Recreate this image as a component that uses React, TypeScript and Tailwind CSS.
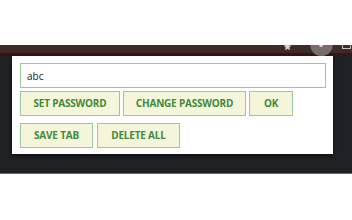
import React from "react"

const btn =
  "h-[25px] whitespace-nowrap border border-[#9cc79c] bg-[#f5f5dc] px-0 text-center text-[10px] font-bold uppercase tracking-[-0.2px] text-[#3f8a3a] [font-family:'Open_Sans',sans-serif]"

export default function App() {
  return (
    <div className="h-[220px] w-[352px] overflow-hidden bg-white">
      <div className="h-[45px]" />
      <div className="relative h-[128px] overflow-hidden bg-[#202124]">
        <div className="h-[8px] bg-[#3d2b25]" />
        <div className="h-[3px] bg-[#3a1414]" />
        {/* toolbar icons peeking above the popup */}
        <svg className="absolute left-[283px] top-[-3px]" width="9" height="9" viewBox="0 0 24 24">
          <path d="M12 2l3 6.9 7.5.7-5.7 5 1.7 7.4L12 18.1 5.5 22l1.7-7.4-5.7-5 7.5-.7z" fill="#e0d4d0" />
        </svg>
        <span className="absolute left-[310px] top-[-12px] h-[23px] w-[23px] rounded-full bg-[#7a6c6a]" />
        <span className="absolute left-[319px] top-[-2px] h-[4px] w-[4px] rounded-full bg-[#e6dcda]" />
        <span className="absolute left-[342px] top-[-3px] h-[7px] w-[9px] border border-[#cfc0bc]" />
        <div className="relative ml-[12px] w-[321px] bg-white px-[8px] pb-[6px] pt-[7px] shadow-[0_2px_4px_rgba(0,0,0,0.6)]">
          <input
            readOnly
            value="abc"
            className="block h-[25px] w-[306px] border border-[#9cc79c] px-[6px] text-[10px] text-[#222] outline-none [font-family:'Open_Sans',sans-serif]"
          />
          <div className="mt-[3px] flex gap-[3px]">
            <button className={`${btn} w-[100px]`}>Set Password</button>
            <button className={`${btn} w-[123px]`}>Change Password</button>
            <button className={`${btn} w-[44px]`}>OK</button>
          </div>
          <div className="mt-[7px] flex gap-[4px]">
            <button className={`${btn} w-[73px]`}>Save Tab</button>
            <button className={`${btn} w-[83px]`}>Delete All</button>
          </div>
        </div>
      </div>
      <div className="h-[1px] bg-[#6a6a6a]" />
    </div>
  )
}
